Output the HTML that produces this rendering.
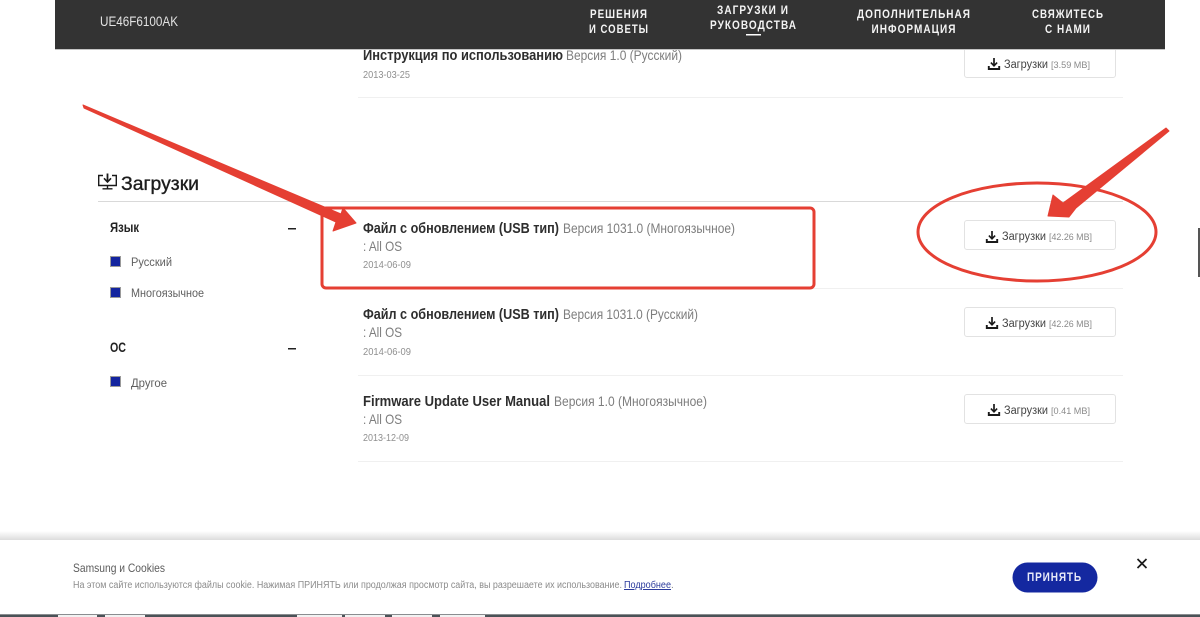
<!DOCTYPE html>
<html lang="ru">
<head>
<meta charset="utf-8">
<title>UE46F6100AK</title>
<style>
html,body{margin:0;padding:0;width:1200px;height:617px;overflow:hidden;background:#fff}
svg{display:block;position:absolute;left:0;top:0;font-family:"Liberation Sans","DejaVu Sans",sans-serif}
.n{font-weight:700;font-size:11.5px;fill:#f4f4f4;text-anchor:middle;letter-spacing:1.2px}
.t{font-weight:700;font-size:15px;fill:#2e2e2e}
.v{font-size:14px;fill:#7d7d7d}
.o{font-size:14px;fill:#7d7d7d}
.d{font-size:10.5px;fill:#8f8f8f}
.f{font-size:12px;fill:#5f5f5f}
.h{font-weight:700;font-size:13.5px;fill:#222}
.b{font-size:11.5px;fill:#444}
.s{font-size:9.5px;fill:#8a8a8a}
</style>
</head>
<body>
<svg width="1200" height="617" viewBox="0 0 1200 617" xmlns="http://www.w3.org/2000/svg">
<defs>
<g id="dl" fill="none" stroke="#1a1a1a" stroke-width="1.7">
<path d="M6 0V7.2"/>
<path d="M2.900 4.600L6 7.800L9.100 4.600" stroke-width="1.600"/>
<path d="M0.800 8V11H11.200V8" stroke-width="1.900"/>
</g>
<linearGradient id="sh" x1="0" y1="0" x2="0" y2="1"><stop offset="0" stop-color="#fff"/><stop offset="1" stop-color="#dcdcdc"/></linearGradient>
</defs>

<!-- row top (scrolled) -->
<text x="363" y="60" class="t" textLength="200" lengthAdjust="spacingAndGlyphs">Инструкция по использованию</text>
<text x="566" y="60" class="v" textLength="116" lengthAdjust="spacingAndGlyphs">Версия 1.0 (Русский)</text>
<text x="363" y="78" class="d" textLength="47" lengthAdjust="spacingAndGlyphs">2013-03-25</text>
<rect x="964.500" y="40.500" width="151" height="37" rx="2.500" fill="#fff" stroke="#e2e2e2"/>
<use href="#dl" x="988" y="58"/>
<text x="1004" y="68" class="b" textLength="44" lengthAdjust="spacingAndGlyphs">Загрузки</text>
<text x="1051" y="68" class="s" textLength="39" lengthAdjust="spacingAndGlyphs">[3.59 MB]</text>
<rect x="358" y="97" width="765" height="1" fill="#f0f0f0"/>

<!-- header -->
<rect x="55" y="0" width="1110" height="49" fill="#333333"/>
<rect x="55" y="49" width="1110" height="1" fill="#c4c4c4"/>
<text x="100" y="26" font-size="13.500" fill="#e2e2e2" textLength="78" lengthAdjust="spacingAndGlyphs">UE46F6100AK</text>
<text x="619" y="18" class="n" textLength="58" lengthAdjust="spacingAndGlyphs">РЕШЕНИЯ</text>
<text x="619" y="33" class="n" textLength="60" lengthAdjust="spacingAndGlyphs">И СОВЕТЫ</text>
<text x="753" y="14" class="n" textLength="72" lengthAdjust="spacingAndGlyphs">ЗАГРУЗКИ И</text>
<text x="753.500" y="29" class="n" textLength="87" lengthAdjust="spacingAndGlyphs">РУКОВОДСТВА</text>
<rect x="746" y="34" width="15" height="1.500" fill="#fff"/>
<text x="914" y="18" class="n" textLength="114" lengthAdjust="spacingAndGlyphs">ДОПОЛНИТЕЛЬНАЯ</text>
<text x="914" y="33" class="n" textLength="85" lengthAdjust="spacingAndGlyphs">ИНФОРМАЦИЯ</text>
<text x="1068" y="18" class="n" textLength="72" lengthAdjust="spacingAndGlyphs">СВЯЖИТЕСЬ</text>
<text x="1068" y="33" class="n" textLength="46" lengthAdjust="spacingAndGlyphs">С НАМИ</text>

<!-- section title -->
<g fill="none" stroke="#1a1a1a" stroke-width="1.400">
<path d="M103 175.500H98.700V185.500H116.300V175.500H112"/>
<path d="M107.500 173.500V181.500" stroke-width="1.800"/>
<path d="M104 178.300L107.500 182L111 178.300" stroke-width="1.600"/>
<path d="M107.500 186V188.500M102.500 188.800H112.500"/>
</g>
<text x="121" y="190" font-size="19" fill="#1c1c1c" stroke="#1c1c1c" stroke-width="0.350" textLength="78" lengthAdjust="spacingAndGlyphs">Загрузки</text>
<rect x="98" y="201" width="1025" height="1" fill="#d9d9d9"/>

<!-- sidebar -->
<text x="110" y="232" class="h" textLength="29" lengthAdjust="spacingAndGlyphs">Язык</text>
<rect x="288" y="228" width="8" height="1.500" fill="#222"/>
<rect x="110.500" y="256.500" width="10" height="10" fill="#14259f" stroke="#9a9a9a"/>
<text x="131" y="266" class="f" textLength="41" lengthAdjust="spacingAndGlyphs">Русский</text>
<rect x="110.500" y="287.500" width="10" height="10" fill="#14259f" stroke="#9a9a9a"/>
<text x="131" y="297" class="f" textLength="73" lengthAdjust="spacingAndGlyphs">Многоязычное</text>
<text x="110" y="352" class="h" textLength="16" lengthAdjust="spacingAndGlyphs">ОС</text>
<rect x="288" y="348" width="8" height="1.500" fill="#222"/>
<rect x="110.500" y="376.500" width="10" height="10" fill="#14259f" stroke="#9a9a9a"/>
<text x="131" y="387" class="f" textLength="36" lengthAdjust="spacingAndGlyphs">Другое</text>

<!-- rows -->
<text x="363" y="233" class="t" textLength="196" lengthAdjust="spacingAndGlyphs">Файл с обновлением (USB тип)</text>
<text x="563" y="233" class="v" textLength="172" lengthAdjust="spacingAndGlyphs">Версия 1031.0 (Многоязычное)</text>
<text x="363" y="251" class="o" textLength="39" lengthAdjust="spacingAndGlyphs">: All OS</text>
<text x="363" y="268" class="d" textLength="48" lengthAdjust="spacingAndGlyphs">2014-06-09</text>
<rect x="358" y="288" width="765" height="1" fill="#f0f0f0"/>

<text x="363" y="319" class="t" textLength="196" lengthAdjust="spacingAndGlyphs">Файл с обновлением (USB тип)</text>
<text x="563" y="319" class="v" textLength="135" lengthAdjust="spacingAndGlyphs">Версия 1031.0 (Русский)</text>
<text x="363" y="337" class="o" textLength="39" lengthAdjust="spacingAndGlyphs">: All OS</text>
<text x="363" y="355" class="d" textLength="48" lengthAdjust="spacingAndGlyphs">2014-06-09</text>
<rect x="358" y="375" width="765" height="1" fill="#f0f0f0"/>

<text x="363" y="406" class="t" textLength="187" lengthAdjust="spacingAndGlyphs">Firmware Update User Manual</text>
<text x="554" y="406" class="v" textLength="153" lengthAdjust="spacingAndGlyphs">Версия 1.0 (Многоязычное)</text>
<text x="363" y="424" class="o" textLength="39" lengthAdjust="spacingAndGlyphs">: All OS</text>
<text x="363" y="441" class="d" textLength="46" lengthAdjust="spacingAndGlyphs">2013-12-09</text>
<rect x="358" y="461" width="765" height="1" fill="#f0f0f0"/>

<!-- buttons -->
<rect x="964.500" y="220.500" width="151" height="29" rx="2.500" fill="#fff" stroke="#e2e2e2"/>
<use href="#dl" x="986" y="231"/>
<text x="1002" y="240" class="b" textLength="44" lengthAdjust="spacingAndGlyphs">Загрузки</text>
<text x="1049" y="240" class="s" textLength="43" lengthAdjust="spacingAndGlyphs">[42.26 MB]</text>

<rect x="964.500" y="307.500" width="151" height="29" rx="2.500" fill="#fff" stroke="#e2e2e2"/>
<use href="#dl" x="986" y="317"/>
<text x="1002" y="327" class="b" textLength="44" lengthAdjust="spacingAndGlyphs">Загрузки</text>
<text x="1049" y="327" class="s" textLength="43" lengthAdjust="spacingAndGlyphs">[42.26 MB]</text>

<rect x="964.500" y="394.500" width="151" height="29" rx="2.500" fill="#fff" stroke="#e2e2e2"/>
<use href="#dl" x="988" y="404"/>
<text x="1004" y="414" class="b" textLength="44" lengthAdjust="spacingAndGlyphs">Загрузки</text>
<text x="1051" y="414" class="s" textLength="39" lengthAdjust="spacingAndGlyphs">[0.41 MB]</text>

<!-- annotations -->
<rect x="322" y="208" width="492" height="80" rx="4" fill="none" stroke="#e53f33" stroke-width="3"/>
<ellipse cx="1037" cy="232" rx="119" ry="49" fill="none" stroke="#e53f33" stroke-width="3"/>
<path d="M83 105L341 214L343 208L356 223L333 231L336 222L84 108Z" fill="#e53f33" stroke="#e53f33" stroke-width="1" stroke-linejoin="round"/>
<path d="M1166 128L1169 131L1076 208L1069 217L1048 216L1053 195L1063 203Z" fill="#e53f33" stroke="#e53f33" stroke-width="1" stroke-linejoin="round"/>

<!-- right edge mark -->
<rect x="1198" y="228" width="2" height="49" fill="#555"/>

<!-- cookie bar -->
<rect x="0" y="531" width="1200" height="9" fill="url(#sh)"/>
<rect x="0" y="540" width="1200" height="74" fill="#fff"/>
<text x="73" y="572" font-size="12" fill="#5c5c5c" textLength="92" lengthAdjust="spacingAndGlyphs">Samsung и Cookies</text>
<text x="73" y="588" font-size="10" fill="#8c8c8c" textLength="549" lengthAdjust="spacingAndGlyphs">На этом сайте используются файлы cookie. Нажимая ПРИНЯТЬ или продолжая просмотр сайта, вы разрешаете их использование.</text>
<text x="624" y="588" font-size="10" fill="#2a3a9c" text-decoration="underline" textLength="47" lengthAdjust="spacingAndGlyphs">Подробнее</text>
<text x="671" y="588" font-size="10" fill="#8c8c8c">.</text>
<rect x="1012.500" y="562.500" width="85" height="30" rx="15" fill="#1428a0"/>
<text x="1054.500" y="581" font-size="11.500" font-weight="700" fill="#e8eaf8" text-anchor="middle" letter-spacing="1" textLength="55" lengthAdjust="spacingAndGlyphs">ПРИНЯТЬ</text>
<path d="M1137.500 559L1146.500 568M1146.500 559L1137.500 568" stroke="#1a1a1a" stroke-width="1.700" fill="none"/>

<!-- taskbar strip -->
<rect x="0" y="614" width="1200" height="3" fill="#4a5257"/>
<rect x="0" y="614" width="1200" height="1" fill="#8a8d90"/>
<g fill="#f2f2f2">
<rect x="58" y="615" width="39" height="2"/>
<rect x="105" y="615" width="40" height="2"/>
<rect x="297" y="615" width="45" height="2"/>
<rect x="345" y="615" width="40" height="2"/>
<rect x="392" y="615" width="40" height="2"/>
<rect x="440" y="615" width="45" height="2"/>
</g>
</svg>
</body>
</html>
